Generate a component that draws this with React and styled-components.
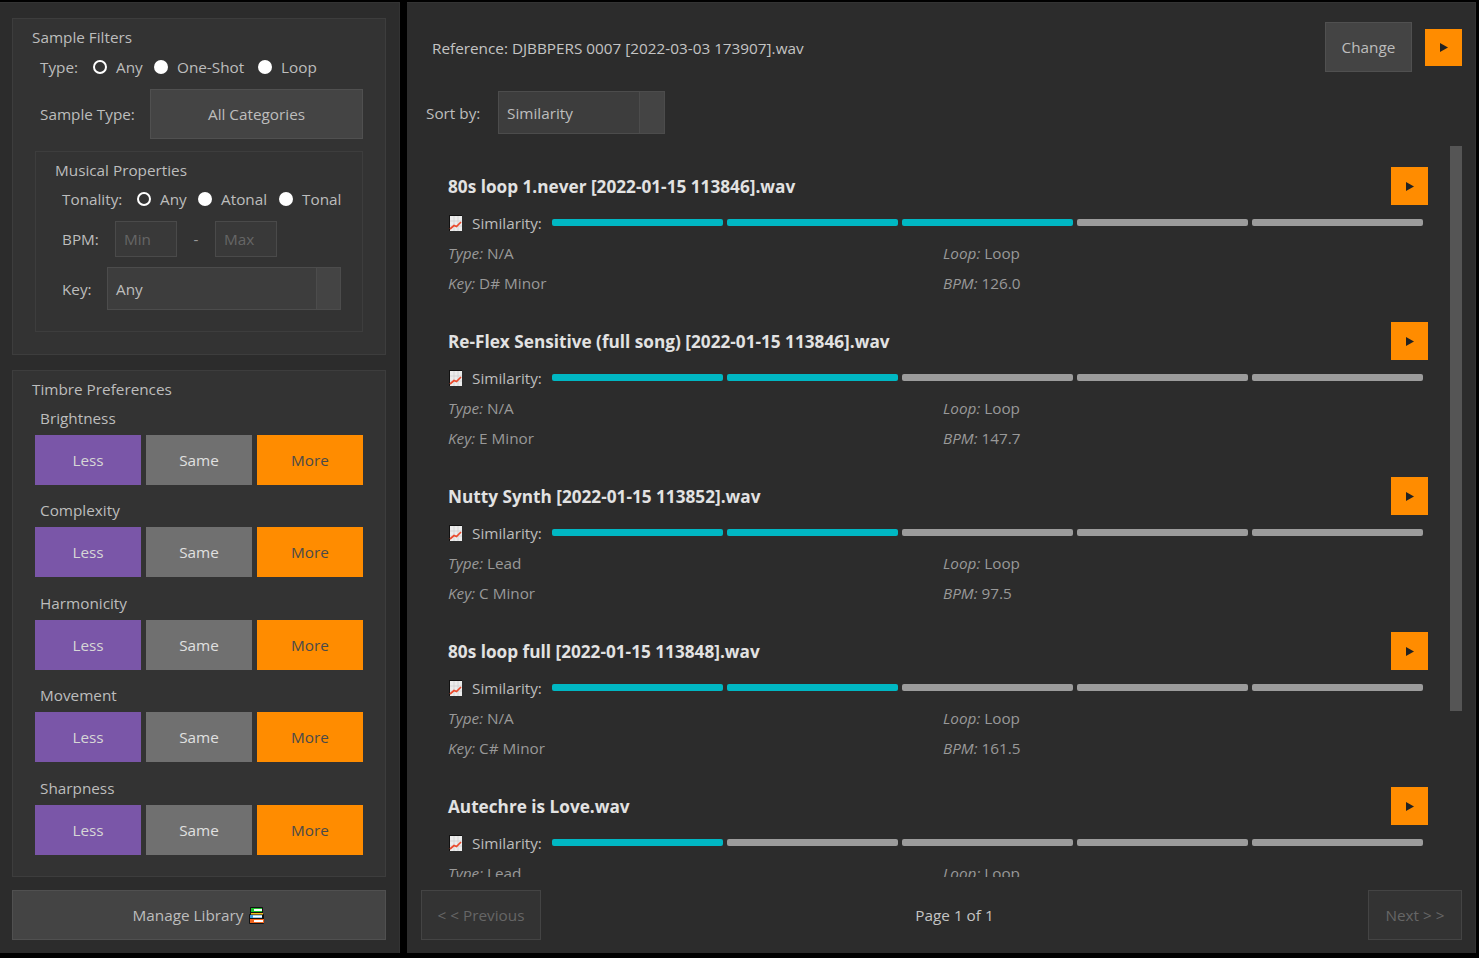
import React from 'react';
import styled, { createGlobalStyle } from 'styled-components';

const Global = createGlobalStyle`
  html, body { margin: 0; padding: 0; background: #000; height: 100%; overflow: hidden; }
  body { font-family: "Open Sans", "Noto Sans", sans-serif; font-size: 15.3px; color: #bdbdbd; }
  * { box-sizing: border-box; }
`;

const Page = styled.div`
  display: flex; gap: 7px; width: 1479px; height: 958px;
  padding: 2px 3px 5px 0;
`;
const LeftPanel = styled.aside`
  width: 400px; flex: none; background: #2c2c2c; border-right: 1px solid #333; border-top: 1px solid #333;
  padding: 15px 13px 13px 12px; display: flex; flex-direction: column;
`;
const RightPanel = styled.main`
  flex: 1; min-width: 0; background: #2c2c2c; border-top: 1px solid #333; border-right: 1px solid #333;
  display: flex; flex-direction: column; padding: 0 13px 13px 14px;
`;
const Card = styled.section`
  background: #333; border: 1px solid #3d3d3d;
  padding: 8px 22px 0 19px;
  height: ${p => p.$h}px; margin-bottom: ${p => p.$mb || 0}px;
  display: flex; flex-direction: column;
`;
const CardTitle = styled.div`
  line-height: 20px; color: #bdbdbd;
`;
const RadioRow = styled.div`
  display: flex; align-items: center; height: 20px; margin: ${p => p.$m};
`;
const Label = styled.span`
  width: ${p => p.$w}px; flex: none; line-height: 20px;
`;
const Radio = styled.span`
  width: 14px; height: 14px; border-radius: 50%; flex: none; margin-right: 9px;
  background: ${p => p.$on ? '#333' : '#fff'};
  border: ${p => p.$on ? '2.5px solid #fff' : 'none'};
`;
const RadioText = styled.span`
  width: ${p => p.$w}px; flex: none; line-height: 20px;
`;
const FieldRow = styled.div`
  display: flex; align-items: center; margin: ${p => p.$m};
`;
const DarkButton = styled.button`
  font: inherit; color: #bdbdbd; background: #444; border: 1px solid #505050;
  height: 50px; width: ${p => p.$w ? p.$w + 'px' : '100%'}; margin-right: ${p => p.$mr || 0}px;
  flex: none; padding: 0; display: flex; align-items: center; justify-content: center; gap: 6px;
`;
const Inner = styled.div`
  border: 1px solid #3d3d3d; margin-top: 12px; height: 181px; width: 328px; margin-left: 3px;
  padding: 8px 0 0 19px; display: flex; flex-direction: column;
`;
const NumInput = styled.div`
  width: 62px; height: 36px; border: 1px solid #4a4a4a; background: #393939; color: #666;
  padding-left: 8px; line-height: 34px; flex: none;
`;
const Dash = styled.span`
  width: 38px; text-align: center; color: #999; flex: none;
`;
const Select = styled.div`
  display: flex; height: 43px; width: ${p => p.$w}px; border: 1px solid #4c4c4c; background: #3d3d3d; flex: none;
`;
const SelectValue = styled.div`
  flex: 1; padding-left: 8px; display: flex; align-items: center; color: #bdbdbd;
`;
const SelectArrow = styled.div`
  width: ${p => p.$w}px; background: #444; border-left: 1px solid #4c4c4c; flex: none;
`;
const Group = styled.div`
  margin-top: ${p => p.$mt}px;
`;
const GroupLabel = styled.div`
  margin-left: 8px; line-height: 20px; height: 27px;
`;
const Choice = styled.div`
  display: grid; grid-template-columns: repeat(3, 106px); column-gap: 5px; margin-left: 3px;
`;
const ChoiceBtn = styled.button`
  font: inherit; height: 50px; border: none; padding: 0;
  background: ${p => p.$bg}; color: ${p => p.$fg};
`;
const Header = styled.div`
  display: flex; align-items: center; height: 88px; flex: none; padding-left: 11px;
`;
const RefText = styled.div`
  flex: 1; color: #c4c4c4; padding-top: 1px;
`;
const Play = styled.button`
  width: 37px; height: ${p => p.$h || 38}px; flex: none; background: #ff8c00; border: none; padding: 0;
  display: flex; align-items: center; justify-content: center;
`;
const SortRow = styled.div`
  display: flex; align-items: center; height: 43px; flex: none; padding-left: 5px;
`;
const ListWrap = styled.div`
  position: relative; height: 734px; flex: none; margin-top: 9px; overflow: hidden;
`;
const Scrollbar = styled.div`
  position: absolute; right: 0; top: 3px; width: 12px; height: 565px; background: #555;
`;
const List = styled.div`
  padding: 24px 34px 0 27px;
  height: 734px; overflow: hidden;
`;
const Item = styled.article`
  height: 155px;
`;
const TitleRow = styled.div`
  display: flex; align-items: center; justify-content: space-between; height: 38px;
`;
const Title = styled.div`
  font-weight: 700; font-size: 17.2px; color: #e2e2e2;
`;
const SimRow = styled.div`
  display: flex; align-items: center; height: 20px; margin-top: 8px; padding: 0 5px 0 1px;
`;
const SimLabel = styled.span`
  width: 80px; flex: none; margin-left: 10px;
`;
const Bars = styled.div`
  flex: 1; display: grid; grid-template-columns: repeat(5, 1fr); gap: 4px; margin-bottom: 2px;
`;
const Bar = styled.div`
  height: 7px; border-radius: 2px; background: ${p => p.$on ? '#00b7c3' : '#9c9c9c'};
`;
const Meta = styled.div`
  display: grid; grid-template-columns: 495px 1fr; grid-auto-rows: 30px; margin-top: 5px; color: #999;
  & > div { line-height: 30px; }
  & em { font-style: italic; }
`;
const Footer = styled.div`
  display: flex; align-items: center; justify-content: space-between; flex: none; margin-top: 13px;
`;
const PageBtn = styled.button`
  font: inherit; height: 50px; width: ${p => p.$w}px; background: #333; border: 1px solid #444; color: #666; padding: 0;
`;
const PageText = styled.div`
  color: #c4c4c4;
`;
const Icon = styled.svg`
  flex: none;
`;

const Tri = () => (
  <svg width="8" height="9" viewBox="0 0 8 9"><path d="M0 0 L8 4.5 L0 9Z" fill="#222" /></svg>
);

const ChartIcon = () => (
  <Icon width="13" height="16" viewBox="0 0 13 16">
    <rect x="0" y="0" width="13" height="16" fill="#111" />
    <rect x="1" y="1" width="12" height="15" fill="#ececec" />
    <path d="M5 1v15M9 1v15M1 6h12M1 11h12" stroke="#cfcfcf" strokeWidth="0.7" />
    <path d="M1 14 L5 10.5 L7.5 11.5 L12 7" fill="none" stroke="#ea4a2c" strokeWidth="1.7" />
  </Icon>
);

const BooksIcon = () => (
  <Icon width="16" height="17" viewBox="0 0 16 17">
    <rect x="1" y="0" width="13" height="17" rx="1" fill="#111" />
    <rect x="0" y="7" width="15" height="10" rx="1" fill="#111" />
    <rect x="2" y="1" width="11" height="4" fill="#1fc02b" />
    <rect x="5" y="2" width="8" height="2" fill="#fff" />
    <rect x="2" y="6" width="12" height="1.5" fill="#f1b81e" />
    <rect x="1" y="8" width="12" height="3" fill="#3a9be0" />
    <rect x="4" y="8.5" width="9" height="2" fill="#fff" />
    <rect x="1" y="12" width="14" height="4" fill="#f0641e" />
    <rect x="5" y="13" width="9" height="2" fill="#fff" />
  </Icon>
);

const timbre = [
  ['Brightness', 9], ['Complexity', 15], ['Harmonicity', 16], ['Movement', 15], ['Sharpness', 16],
];

const samples = [
  ['80s loop 1.never [2022-01-15 113846].wav', 3, 'N/A', 'Loop', 'D# Minor', '126.0'],
  ['Re-Flex Sensitive (full song) [2022-01-15 113846].wav', 2, 'N/A', 'Loop', 'E Minor', '147.7'],
  ['Nutty Synth [2022-01-15 113852].wav', 2, 'Lead', 'Loop', 'C Minor', '97.5'],
  ['80s loop full [2022-01-15 113848].wav', 2, 'N/A', 'Loop', 'C# Minor', '161.5'],
  ['Autechre is Love.wav', 1, 'Lead', 'Loop', null, null],
];

export default function App() {
  return (
    <Page>
      <Global />
      <LeftPanel>
        <Card $h={337} $mb={15}>
          <CardTitle>Sample Filters</CardTitle>
          <RadioRow $m="10px 0 0 8px">
            <Label $w={53}>Type:</Label>
            <Radio $on /><RadioText $w={38}>Any</RadioText>
            <Radio /><RadioText $w={81}>One-Shot</RadioText>
            <Radio /><RadioText $w={40}>Loop</RadioText>
          </RadioRow>
          <FieldRow $m="12px 0 0 8px">
            <Label $w={110}>Sample Type:</Label>
            <DarkButton $w={213}>All Categories</DarkButton>
          </FieldRow>
          <Inner>
            <CardTitle>Musical Properties</CardTitle>
            <RadioRow $m="9px 0 0 7px">
              <Label $w={75}>Tonality:</Label>
              <Radio $on /><RadioText $w={38}>Any</RadioText>
              <Radio /><RadioText $w={58}>Atonal</RadioText>
              <Radio /><RadioText $w={40}>Tonal</RadioText>
            </RadioRow>
            <FieldRow $m="12px 0 0 7px">
              <Label $w={53}>BPM:</Label>
              <NumInput>Min</NumInput>
              <Dash>-</Dash>
              <NumInput>Max</NumInput>
            </FieldRow>
            <FieldRow $m="10px 0 0 7px">
              <Label $w={45}>Key:</Label>
              <Select $w={234}>
                <SelectValue>Any</SelectValue>
                <SelectArrow $w={24} />
              </Select>
            </FieldRow>
          </Inner>
        </Card>
        <Card $h={507} $mb={13}>
          <CardTitle>Timbre Preferences</CardTitle>
          {timbre.map(([name, mt]) => (
            <Group key={name} $mt={mt}>
              <GroupLabel>{name}</GroupLabel>
              <Choice>
                <ChoiceBtn $bg="#7a56a8" $fg="#d6d6d6">Less</ChoiceBtn>
                <ChoiceBtn $bg="#707070" $fg="#e0e0e0">Same</ChoiceBtn>
                <ChoiceBtn $bg="#ff8c00" $fg="#4a4a4a">More</ChoiceBtn>
              </Choice>
            </Group>
          ))}
        </Card>
        <DarkButton>Manage Library <BooksIcon /></DarkButton>
      </LeftPanel>
      <RightPanel>
        <Header>
          <RefText>Reference: DJBBPERS 0007 [2022-03-03 173907].wav</RefText>
          <DarkButton $w={87} $mr={13}>Change</DarkButton>
          <Play $h={37}><Tri /></Play>
        </Header>
        <SortRow>
          <Label $w={72}>Sort by:</Label>
          <Select $w={167}>
            <SelectValue>Similarity</SelectValue>
            <SelectArrow $w={25} />
          </Select>
        </SortRow>
        <ListWrap>
          <List>
            {samples.map(([name, on, type, loop, key, bpm]) => (
              <Item key={name}>
                <TitleRow>
                  <Title>{name}</Title>
                  <Play><Tri /></Play>
                </TitleRow>
                <SimRow>
                  <ChartIcon />
                  <SimLabel>Similarity:</SimLabel>
                  <Bars>
                    {[0, 1, 2, 3, 4].map(i => <Bar key={i} $on={i < on} />)}
                  </Bars>
                </SimRow>
                <Meta>
                  <div><em>Type:</em> {type}</div>
                  <div><em>Loop:</em> {loop}</div>
                  {key && <div><em>Key:</em> {key}</div>}
                  {bpm && <div><em>BPM:</em> {bpm}</div>}
                </Meta>
              </Item>
            ))}
          </List>
          <Scrollbar />
        </ListWrap>
        <Footer>
          <PageBtn $w={120}>&lt; &lt; Previous</PageBtn>
          <PageText>Page 1 of 1</PageText>
          <PageBtn $w={94}>Next &gt; &gt;</PageBtn>
        </Footer>
      </RightPanel>
    </Page>
  );
}
